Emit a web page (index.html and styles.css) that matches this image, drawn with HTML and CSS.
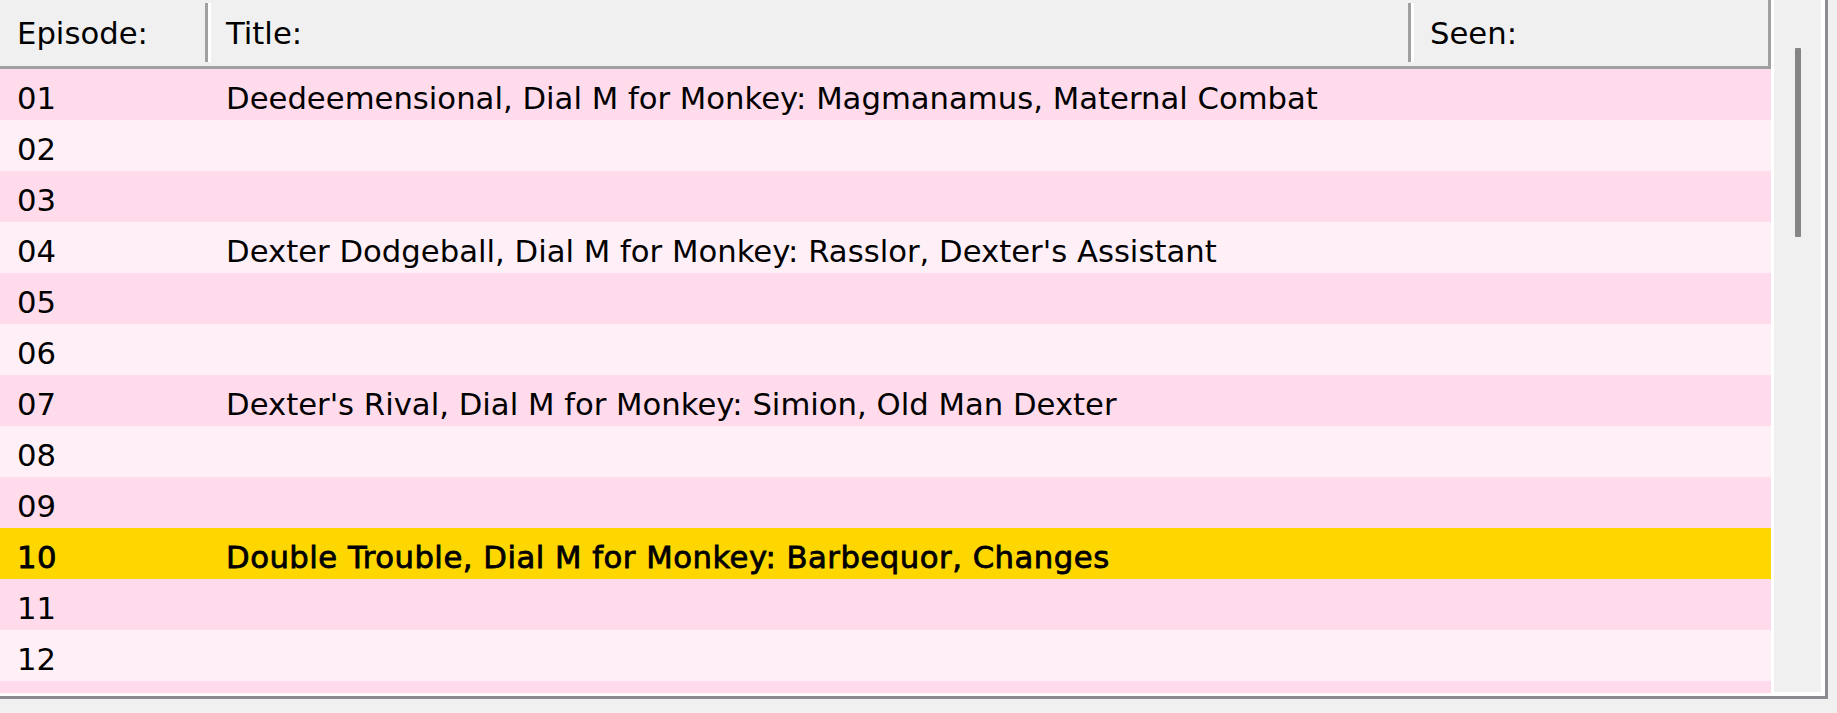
FILE: index.html
```html
<!DOCTYPE html>
<html lang="en">
<head>
  <meta charset="UTF-8" />
  <title>Episodes</title>
  <link rel="stylesheet" href="styles.css">
</head>
<body>
  <div class="frame">
    <div class="list">
      <div class="head">
        <div class="hcell col-ep">Episode:</div>
        <div class="sep"></div>
        <div class="hcell col-title">Title:</div>
        <div class="sep"></div>
        <div class="hcell col-seen">Seen:</div>
      </div>
      <div class="rows">
        <div class="row"><div class="cell">01</div><div class="cell title">Deedeemensional, Dial M for Monkey: Magmanamus, Maternal Combat</div><div class="cell"></div></div>
        <div class="row"><div class="cell">02</div><div class="cell title"></div><div class="cell"></div></div>
        <div class="row"><div class="cell">03</div><div class="cell title"></div><div class="cell"></div></div>
        <div class="row"><div class="cell">04</div><div class="cell title">Dexter Dodgeball, Dial M for Monkey: Rasslor, Dexter's Assistant</div><div class="cell"></div></div>
        <div class="row"><div class="cell">05</div><div class="cell title"></div><div class="cell"></div></div>
        <div class="row"><div class="cell">06</div><div class="cell title"></div><div class="cell"></div></div>
        <div class="row"><div class="cell">07</div><div class="cell title">Dexter's Rival, Dial M for Monkey: Simion, Old Man Dexter</div><div class="cell"></div></div>
        <div class="row"><div class="cell">08</div><div class="cell title"></div><div class="cell"></div></div>
        <div class="row"><div class="cell">09</div><div class="cell title"></div><div class="cell"></div></div>
        <div class="row current"><div class="cell">10</div><div class="cell title">Double Trouble, Dial M for Monkey: Barbequor, Changes</div><div class="cell"></div></div>
        <div class="row"><div class="cell">11</div><div class="cell title"></div><div class="cell"></div></div>
        <div class="row"><div class="cell">12</div><div class="cell title"></div><div class="cell"></div></div>
        <div class="row"><div class="cell"></div><div class="cell title"></div><div class="cell"></div></div>
      </div>
    </div>
    <div class="scrollbar">
      <div class="thumb"></div>
    </div>
  </div>
</body>
</html>
```
FILE: styles.css
```css
* {
  box-sizing: border-box;
}
body {
  margin: 0;
  background: #f0f0f0;
  font-family: "DejaVu Sans", "Liberation Sans", sans-serif;
  font-size: 30.7px;
  color: #000;
}
.frame {
  box-sizing: content-box;
  width: 1821px;
  height: 693px;
  padding: 0 4px 3px 0;
  border-right: 3px solid #898b90;
  border-bottom: 3px solid #898b90;
  background: #fff;
  display: flex;
  gap: 3px;
}
.list {
  width: 1771px;
  height: 693px;
  overflow: hidden;
  display: flex;
  flex-direction: column;
}
.head {
  height: 69px;
  flex-shrink: 0;
  display: flex;
  background: #f0f0f0;
  border-bottom: 3px solid #a0a0a0;
  border-right: 3px solid #a0a0a0;
}
.hcell {
  padding-top: 2px;
  line-height: 64px;
  white-space: nowrap;
}
.col-ep {
  width: 205px;
  padding-left: 17px;
}
.col-title {
  width: 1197px;
  padding-left: 15px;
}
.col-seen {
  flex: 1;
  padding-left: 16px;
}
.sep {
  width: 6px;
  height: 59px;
  margin-top: 3px;
  background: #a0a0a0;
  border-right: 3px solid #fff;
}
.row {
  height: 51px;
  flex-shrink: 0;
  display: grid;
  grid-template-columns: 205px 1203px 1fr;
  background: #fff0f7;
}
.row:nth-child(odd) {
  background: #ffdbeb;
}
.row.current {
  background: #ffd700;
  -webkit-text-stroke: 0.8px #000;
  letter-spacing: 0.5px;
}
.cell {
  padding: 8px 0 0 17px;
  line-height: 43px;
  white-space: nowrap;
  overflow: hidden;
}
.cell.title {
  padding-left: 21px;
}
.scrollbar {
  width: 47px;
  height: 692px;
  background: #f0f0f0;
  padding: 48px 0 0 21px;
}
.thumb {
  width: 6px;
  height: 189px;
  background: #858585;
  border-radius: 1px;
}
```
